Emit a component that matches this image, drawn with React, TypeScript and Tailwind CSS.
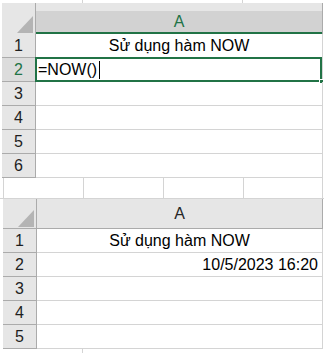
import React from 'react';

const GREEN = '#217346';

// Select-all corner triangle
const CornerTriangle: React.FC = () => (
  <svg width="16" height="17" viewBox="0 0 16 17" className="absolute right-[2px] bottom-[1px]">
    <polygon points="16,0 16,17 0,17" fill="#b4b4b4" />
  </svg>
);

interface RowProps {
  num: number;
  active?: boolean;
  children?: React.ReactNode;
  align?: 'left' | 'center' | 'right';
}

const Row: React.FC<RowProps> = ({ num, active, children, align = 'left' }) => {
  const alignCls =
    align === 'center' ? 'justify-center' : align === 'right' ? 'justify-end pr-[4px]' : 'justify-start pl-[2px]';
  return (
    <div className="flex h-[24px]">
      <div
        className={`w-[34px] shrink-0 flex items-center justify-center border-b border-r border-[#ababab] text-[16px] ${
          active ? 'bg-[#dcdcdc] text-[#217346]' : 'bg-[#e6e6e6] text-[#1f1f1f]'
        }`}
      >
        {num}
      </div>
      <div className={`relative flex-1 flex items-center border-b border-r border-[#d4d4d4] text-[16px] text-black ${alignCls}`}>
        {children}
      </div>
    </div>
  );
};

export default function App() {
  return (
    <div className="w-[324px] h-[354px] bg-white overflow-hidden font-['Liberation_Sans',Arial,sans-serif] leading-none">
      {/* top strip of background grid */}
      <div className="h-[3px] flex">
        <div className="w-[83px] border-r border-[#d4d4d4]" />
        <div className="w-[160px] border-r border-[#d4d4d4]" />
      </div>

      {/* Sheet 1 */}
      <div className="ml-[2px] w-[321px]">
        <div className="flex h-[31px]">
          <div className="relative w-[34px] shrink-0 bg-[#e6e6e6] border-r border-[#ababab]">
            <CornerTriangle />
          </div>
          <div className="flex-1 flex flex-col border-r border-[#ababab]">
            <div className="h-[8px] bg-[#e6e6e6]" />
            <div className="flex-1 bg-[#d2d2d2] flex items-center justify-center text-[16px] text-[#217346] border-b-2 border-[#217346]">
              A
            </div>
          </div>
        </div>
        <Row num={1} align="center">Sử dụng hàm NOW</Row>
        <Row num={2} active>
          <span>=NOW()</span>
          <span className="ml-[2px] h-[18px] border-l border-black" />
          <div className="absolute -top-[1px] -left-[1px] right-0 -bottom-[1px] border-2" style={{ borderColor: GREEN }} />
          <div className="absolute -right-[2px] -bottom-[3px] w-[5px] h-[5px] bg-[#217346] border border-white" />
        </Row>
        <Row num={3} />
        <Row num={4} />
        <Row num={5} />
        <Row num={6} />
      </div>

      {/* gap: background grid cells */}
      <div className="h-[21px] flex border-b border-[#d4d4d4]">
        <div className="w-[3px]" />
        <div className="w-[80px] border-l border-[#d4d4d4]" />
        <div className="w-[80px] border-l border-[#d4d4d4]" />
        <div className="w-[80px] border-l border-[#d4d4d4]" />
        <div className="w-[80px] border-l border-r border-[#d4d4d4]" />
      </div>

      {/* Sheet 2 */}
      <div className="ml-[3px] w-[320px]">
        <div className="flex h-[30px] border-b border-[#ababab]">
          <div className="relative w-[34px] shrink-0 bg-[#e6e6e6] border-r border-[#ababab]">
            <CornerTriangle />
          </div>
          <div className="flex-1 bg-[#e6e6e6] flex items-center justify-center text-[16px] text-[#262626] border-r border-[#ababab]">
            A
          </div>
        </div>
        <Row num={1} align="center">Sử dụng hàm NOW</Row>
        <Row num={2} align="right">10/5/2023 16:20</Row>
        <Row num={3} />
        <Row num={4} />
        <Row num={5} />
      </div>

      <div className="flex h-[4px]">
        <div className="w-[83px] border-r border-[#d4d4d4]" />
      </div>
    </div>
  );
}
